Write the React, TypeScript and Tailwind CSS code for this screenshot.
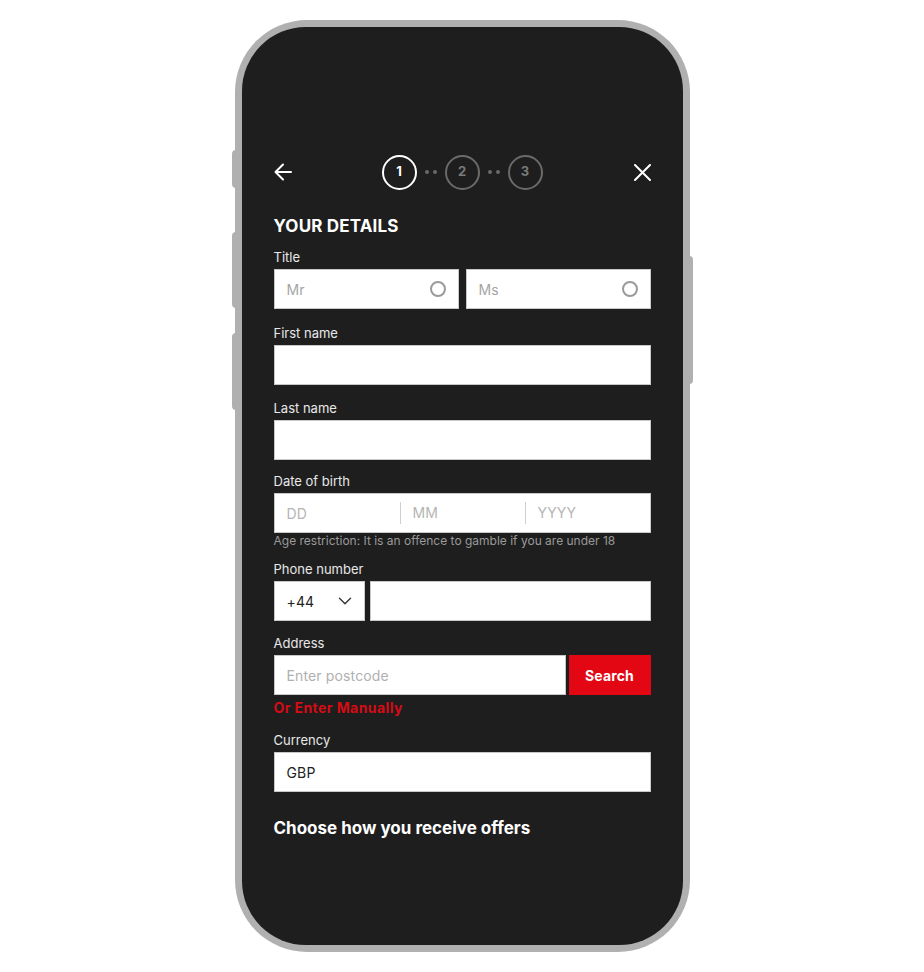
import { ChevronDown } from "lucide-react";

function Label({ children }: { children: React.ReactNode }) {
  return <p className="text-[13px] leading-[16px] text-white/90 mb-[4px]">{children}</p>;
}

function Box({ className = "", children }: { className?: string; children?: React.ReactNode }) {
  return (
    <div className={"h-[40px] bg-white border border-[#c8c8c8] flex items-center px-[12px] text-[14px] tracking-[0.01em] " + className}>
      {children}
    </div>
  );
}

function Step({ n, active }: { n: number; active?: boolean }) {
  return (
    <div
      className={
        "w-[35px] h-[35px] rounded-full border-2 flex items-center justify-center text-[13px] font-bold " +
        (active ? "border-white text-white" : "border-[#6a6a6a] text-[#7a7a7a]")
      }
    >
      {n}
    </div>
  );
}

function Dots() {
  return (
    <div className="flex gap-[4px] mx-[8px]">
      <span className="w-[4px] h-[4px] rounded-full bg-[#6a6a6a]" />
      <span className="w-[4px] h-[4px] rounded-full bg-[#6a6a6a]" />
    </div>
  );
}

function Radio() {
  return <span className="ml-auto w-[16px] h-[16px] rounded-full border-2 border-[#9a9a9a]" />;
}

export default function App() {
  return (
    <div className="min-h-screen bg-white pt-[20px]" style={{ fontFamily: "Inter, 'Open Sans', sans-serif" }}>
      <div className="relative mx-auto w-[455px] h-[932px] rounded-[72px] bg-[#b0b0b0] p-[7px]">
        {/* side buttons */}
        <div className="absolute left-[-3px] top-[130px] w-[4px] h-[38px] rounded-l bg-[#b0b0b0]" />
        <div className="absolute left-[-3px] top-[212px] w-[4px] h-[76px] rounded-l bg-[#b0b0b0]" />
        <div className="absolute left-[-3px] top-[313px] w-[4px] h-[77px] rounded-l bg-[#b0b0b0]" />
        <div className="absolute right-[-3px] top-[236px] w-[4px] h-[128px] rounded-r bg-[#b0b0b0]" />

        <div className="h-full rounded-[64px] bg-[#1e1e1e] px-[32px] pt-[127px] text-white">
          {/* header */}
          <div className="flex items-center justify-between h-[36px]">
            <svg width="18" height="18" viewBox="0 0 18 18" fill="none" stroke="white" strokeWidth="2" strokeLinecap="round" strokeLinejoin="round">
              <path d="M17 9H1.5M9 1.5 1.5 9 9 16.5" />
            </svg>
            <div className="flex items-center mr-[1px]">
              <Step n={1} active />
              <Dots />
              <Step n={2} />
              <Dots />
              <Step n={3} />
            </div>
            <svg width="17" height="17" viewBox="0 0 17 17" fill="none" stroke="white" strokeWidth="2" strokeLinecap="round">
              <path d="M1 1 16 16M16 1 1 16" />
            </svg>
          </div>

          <h1 className="mt-[26px] text-[17px] leading-[20px] font-bold tracking-[0.01em]">YOUR DETAILS</h1>

          <div className="mt-[13px]">
            <Label>Title</Label>
            <div className="grid grid-cols-2 gap-[7px]">
              <Box className="text-[#a5a5a5]">
                Mr
                <Radio />
              </Box>
              <Box className="text-[#a5a5a5]">
                Ms
                <Radio />
              </Box>
            </div>
          </div>

          <div className="mt-[16px]">
            <Label>First name</Label>
            <Box />
          </div>

          <div className="mt-[15px]">
            <Label>Last name</Label>
            <Box />
          </div>

          <div className="mt-[13px]">
            <Label>Date of birth</Label>
            <div className="h-[40px] bg-white border border-[#c8c8c8] grid grid-cols-3 items-center text-[14px] tracking-[0.01em] text-[#b5b5b5]">
              <div className="px-[12px]">DD</div>
              <div className="px-[12px] border-l border-[#cfcfcf] leading-[22px]">MM</div>
              <div className="px-[12px] border-l border-[#cfcfcf] leading-[22px]">YYYY</div>
            </div>
            <p className="mt-[1px] text-[12px] leading-[14px] text-[#9a9a9a]">
              Age restriction: It is an offence to gamble if you are under 18
            </p>
          </div>

          <div className="mt-[13px]">
            <Label>Phone number</Label>
            <div className="flex gap-[5px]">
              <Box className="w-[91px] text-[#222]">
                +44
                <ChevronDown className="ml-auto w-[22px] h-[22px] text-[#333] -mr-[4px]" strokeWidth={1.5} />
              </Box>
              <Box className="flex-1" />
            </div>
          </div>

          <div className="mt-[14px]">
            <Label>Address</Label>
            <div className="flex gap-[3px]">
              <Box className="flex-1 text-[#b0b0b0]">Enter postcode</Box>
              <button className="w-[82px] h-[40px] bg-[#e30613] text-white text-[14px] font-bold tracking-[0.01em]">Search</button>
            </div>
            <p className="mt-[5px] text-[14px] leading-[16px] font-bold tracking-[0.03em] text-[#d50b15]">Or Enter Manually</p>
          </div>

          <div className="mt-[16px]">
            <Label>Currency</Label>
            <Box className="text-[#222]">GBP</Box>
          </div>

          <h2 className="mt-[26px] text-[17px] leading-[20px] font-bold">Choose how you receive offers</h2>
        </div>
      </div>
    </div>
  );
}
